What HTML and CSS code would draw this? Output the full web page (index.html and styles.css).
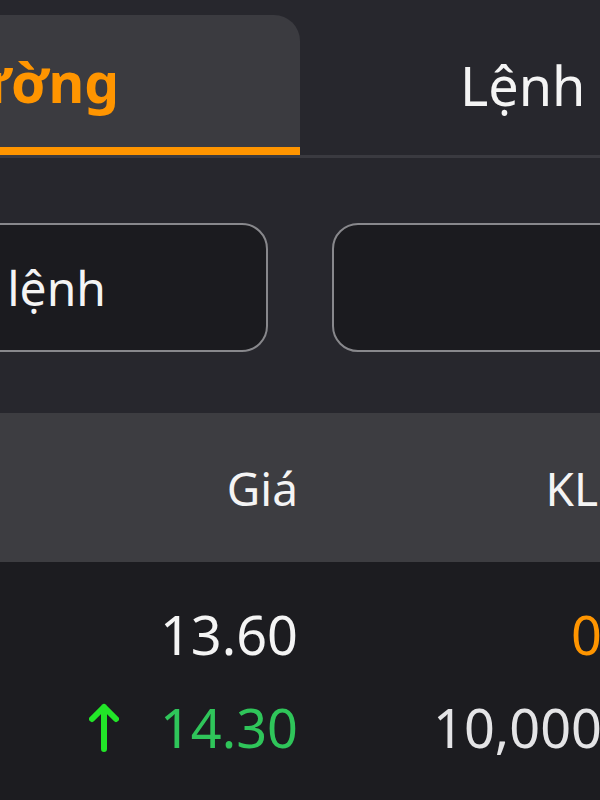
FILE: index.html
```html
<!DOCTYPE html>
<html>
  <head>
    <link rel="stylesheet" href="styles.css">
    <title>Thị trường</title>
  </head>
  <body>
    <div class="screen">
      <div class="tabs">
        <div class="tab tab-active"><span>Thị trường</span></div>
        <div class="tab"><span>Lệnh</span></div>
      </div>

      <div class="filters">
        <div class="select-box select-left"><span>Loại lệnh</span></div>
        <div class="select-box select-right"></div>
      </div>

      <div class="table-head">
        <div class="cell">Giá</div>
        <div class="cell">KL</div>
      </div>

      <div class="table-body">
        <div class="row">
          <div class="cell">13.60</div>
          <div class="cell vol-orange">0</div>
        </div>
        <div class="row">
          <div class="cell price-up">
            <svg class="arrow" width="30" height="50" viewBox="0 0 30 50">
              <path d="M15 46 L15 4 M3 16 L15 4 L27 16" fill="none" stroke="#22e628" stroke-width="6" stroke-linecap="round" stroke-linejoin="round"/>
            </svg>
            <span>14.30</span>
          </div>
          <div class="cell vol-gray">10,000</div>
        </div>
      </div>
    </div>
  </body>
</html>
```

FILE: styles.css
```css
body {
  margin: 0;
  background: #27272d;
  font-family: "Noto Sans", "Open Sans", sans-serif;
  overflow: hidden;
}

.screen {
  width: 600px;
  height: 800px;
  overflow: hidden;
  background: #1c1c20;
}

.tabs {
  display: flex;
  padding-top: 15px;
  background: #27272d;
  border-bottom: 3px solid #3a3a40;
  height: 140px;
}

.tab {
  display: flex;
  align-items: center;
  font-size: 54px;
  color: #f4f4f4;
}

.tab-active {
  width: 600px;
  flex-shrink: 0;
  margin-left: -300px;
  justify-content: flex-end;
  padding-right: 181px;
  box-sizing: border-box;
  background: #3b3b40;
  border-top-right-radius: 26px;
  border-bottom: 8px solid #ff9500;
  color: #ff9500;
  font-weight: bold;
  font-size: 55px;
}

.tab:not(.tab-active) {
  padding-left: 160px;
  white-space: nowrap;
}

.filters {
  display: flex;
  gap: 64px;
  padding: 65px 0 61px;
  background: #27272d;
}

.select-box {
  height: 129px;
  box-sizing: border-box;
  border: 2px solid #88888c;
  border-radius: 26px;
  background: #1b1b1f;
  display: flex;
  align-items: center;
  font-size: 48px;
  color: #f4f4f4;
  flex-shrink: 0;
  white-space: nowrap;
}

.select-left {
  width: 500px;
  margin-left: -232px;
  justify-content: flex-end;
  padding-right: 160px;
}

.select-right {
  width: 400px;
}

.table-head {
  display: grid;
  grid-template-columns: 298px 300px;
  height: 149px;
  align-items: center;
  background: #3d3d41;
  color: #f4f4f4;
  font-size: 46px;
}

.cell {
  text-align: right;
  white-space: nowrap;
}

.table-body {
  padding-top: 25px;
}

.row {
  display: grid;
  grid-template-columns: 298px 304px;
  height: 93px;
  align-items: center;
  font-size: 54px;
  color: #f4f4f4;
}

.price-up {
  display: flex;
  justify-content: flex-end;
  align-items: center;
  gap: 41px;
  color: #2fc55a;
}

.arrow {
  margin-top: 2px;
}

.vol-orange {
  color: #ff9500;
}

.vol-gray {
  color: #e4e4e6;
}
```
